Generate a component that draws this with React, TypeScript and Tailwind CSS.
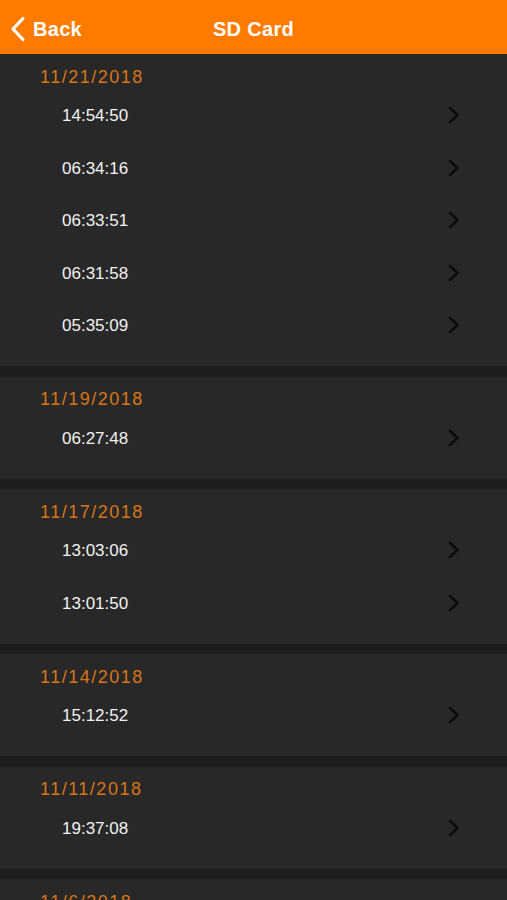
const groups: { date: string; times: string[] }[] = [
  { date: '11/21/2018', times: ['14:54:50', '06:34:16', '06:33:51', '06:31:58', '05:35:09'] },
  { date: '11/19/2018', times: ['06:27:48'] },
  { date: '11/17/2018', times: ['13:03:06', '13:01:50'] },
  { date: '11/14/2018', times: ['15:12:52'] },
  { date: '11/11/2018', times: ['19:37:08'] },
  { date: '11/6/2018', times: ['18:20:41'] },
];

function BackChevron() {
  return (
    <svg width="16" height="26" viewBox="0 0 16 26" fill="none">
      <polyline points="13,2.5 3,13 13,23.5" stroke="white" strokeWidth="3.2" strokeLinecap="round" strokeLinejoin="round" />
    </svg>
  );
}

function RowChevron() {
  return (
    <svg width="14" height="18" viewBox="0 0 14 18" fill="none">
      <polyline points="3,2 10.5,9 3,16" stroke="#0c0c0c" strokeWidth="2.6" strokeLinecap="round" strokeLinejoin="round" />
    </svg>
  );
}

export default function App() {
  return (
    <div className="w-[507px] h-[900px] overflow-hidden bg-[#1d1d1d] font-['Liberation_Sans',Arial,sans-serif]">
      {/* Nav bar */}
      <div className="h-[54px] pt-[3px] bg-[#ff7b00] relative flex items-center justify-center">
        <div className="absolute left-[10px] top-[2px] h-full flex items-center gap-[7px] text-white">
          <BackChevron />
          <span className="text-[20px] font-bold tracking-[0.3px]">Back</span>
        </div>
        <span className="text-[20px] font-bold text-white tracking-[0.3px]">SD Card</span>
      </div>

      <div className="flex flex-col gap-[10.5px]">
        {groups.map((g) => (
          <div key={g.date} className="bg-[#282828] pt-[11px] pb-[14.5px]">
            <div className="h-[24px] pl-[40px] flex items-center text-[18px] tracking-[1.5px] text-[#d97516]">
              {g.date}
            </div>
            {g.times.map((t) => (
              <div key={t} className="h-[52.5px] flex items-center pl-[62px] pr-[46px]">
                <span className="flex-1 text-[17px] text-[#f2f2f2] mt-[1px]">{t}</span>
                <RowChevron />
              </div>
            ))}
          </div>
        ))}
      </div>
    </div>
  );
}
